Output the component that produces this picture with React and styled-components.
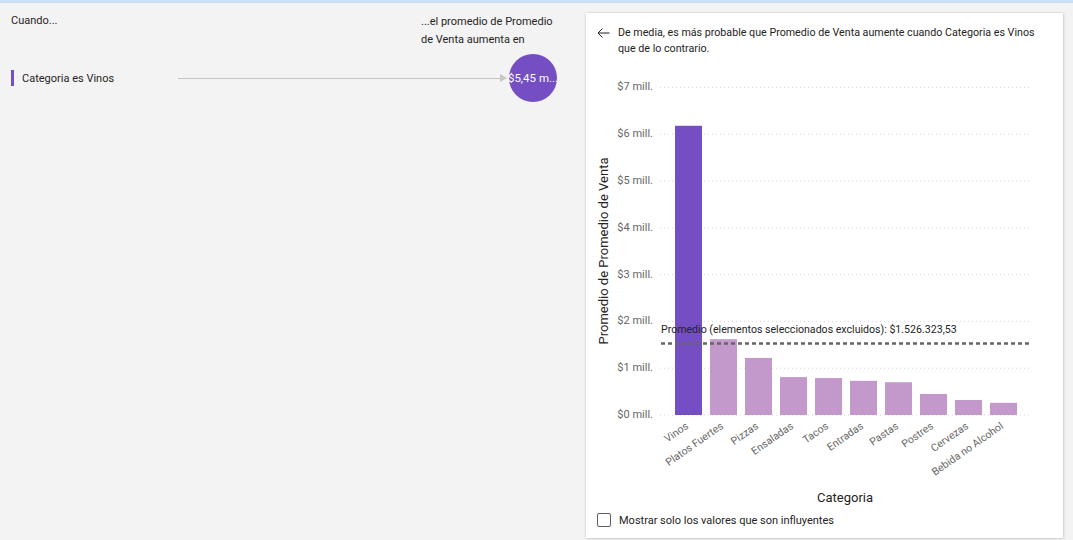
import React from 'react';
import styled, { createGlobalStyle } from 'styled-components';

const GlobalStyle = createGlobalStyle`
  html, body {
    margin: 0;
    padding: 0;
    background: #f3f3f3;
  }
  body {
    font-family: Roboto, "Open Sans", "Noto Sans", sans-serif;
    color: #252423;
  }
`;

const PURPLE = '#744ec2';
const LIGHT = '#c399cb';

const data = [
  { name: 'Vinos', value: 6.18, hi: true },
  { name: 'Platos Fuertes', value: 1.62 },
  { name: 'Pizzas', value: 1.22 },
  { name: 'Ensaladas', value: 0.81 },
  { name: 'Tacos', value: 0.79 },
  { name: 'Entradas', value: 0.73 },
  { name: 'Pastas', value: 0.70 },
  { name: 'Postres', value: 0.45 },
  { name: 'Cervezas', value: 0.32 },
  { name: 'Bebida no Alcohol', value: 0.26 },
];

const Page = styled.div`
  width: 1073px;
  height: 540px;
  box-sizing: border-box;
  border-top: 3px solid #c7e0f4;
  display: flex;
  overflow: hidden;
`;

const LeftPane = styled.div`
  flex: 1;
  padding: 9px 29px 0 11px;
  display: flex;
  flex-direction: column;
`;

const HeaderRow = styled.div`
  display: flex;
  justify-content: space-between;
  font-size: 11px;
  line-height: 18px;
`;

const Result = styled.div`
  width: 136px;
  padding-top: 1px;
`;

const InfluencerRow = styled.div`
  display: flex;
  align-items: center;
  margin-top: 5px;
  height: 48px;
`;

const Marker = styled.span`
  width: 3px;
  height: 16px;
  background: ${PURPLE};
  margin-right: 8px;
`;

const Label = styled.span`
  font-size: 11px;
  width: 156px;
`;

const Connector = styled.div`
  flex: 1;
  height: 1px;
  background: #c8c6c4;
  position: relative;
  &::after {
    content: '';
    position: absolute;
    right: -2px;
    top: -4px;
    border-left: 7px solid #c8c6c4;
    border-top: 4px solid transparent;
    border-bottom: 4px solid transparent;
  }
`;

const Bubble = styled.div`
  width: 48px;
  height: 48px;
  border-radius: 50%;
  background: ${PURPLE};
  color: #fff;
  font-size: 11.5px;
  display: flex;
  align-items: center;
  justify-content: center;
  white-space: nowrap;
  margin-left: 4px;
`;

const Card = styled.div`
  width: 477px;
  margin: 10px 10px 2px 0;
  background: #fff;
  box-shadow: 0 0 2px rgba(0, 0, 0, 0.18), 1px 1px 3px rgba(0, 0, 0, 0.1);
  display: flex;
  flex-direction: column;
`;

const CardHeader = styled.div`
  display: flex;
  align-items: flex-start;
  padding: 12px 10px 0 11px;
  font-size: 10.7px;
  line-height: 16px;
  height: 45px;
  box-sizing: content-box;
`;

const BackIcon = styled.svg`
  flex: none;
  margin: 3px 8px 0 0;
`;

const Chart = styled.svg`
  display: block;
  flex: none;
`;

const Footer = styled.label`
  display: flex;
  align-items: center;
  padding: 0 11px;
  height: 28px;
  font-size: 11px;
  gap: 8px;
`;

const Box = styled.span`
  width: 12px;
  height: 12px;
  border: 1px solid #605e5c;
  border-radius: 2px;
`;

const X0 = 89;
const STEP = 35;
const BW = 27;
const BASE = 345;
const SCALE = 46.8;

function BarChart() {
  const ticks = [0, 1, 2, 3, 4, 5, 6, 7];
  const avgY = BASE - 1.526 * SCALE;
  return (
    <Chart width="477" height="436" viewBox="0 0 477 436">
      {ticks.map((t) => {
        const y = BASE - t * SCALE;
        return (
          <g key={t}>
            <line x1="74" x2="444" y1={y} y2={y} stroke="#d6d6d6" strokeDasharray="1 3" />
            <text x="67" y={y} textAnchor="end" dominantBaseline="middle" fontSize="11" fill="#666">
              ${t} mill.
            </text>
          </g>
        );
      })}
      {data.map((d, i) => {
        const x = X0 + i * STEP;
        const h = d.value * SCALE;
        const ax = x + BW / 2 - 4;
        return (
          <g key={d.name}>
            <rect x={x} y={BASE - h} width={BW} height={h} fill={d.hi ? PURPLE : LIGHT} />
            <text
              x={ax}
              y={351}
              textAnchor="end"
              dominantBaseline="hanging"
              fontSize="10.5"
              fill="#666"
              transform={`rotate(-35 ${ax} 351)`}
            >
              {d.name}
            </text>
          </g>
        );
      })}
      <line x1="75" x2="444" y1={avgY} y2={avgY} stroke="#666" strokeWidth="2.5" strokeDasharray="4 3" />
      <text x="75" y={avgY - 11} fontSize="10.6" fill="#252423">
        Promedio (elementos seleccionados excluidos): $1.526.323,53
      </text>
      <text x="259" y="429" textAnchor="middle" dominantBaseline="middle" fontSize="13" fill="#252423">
        Categoria
      </text>
      <text
        x="19"
        y="181"
        textAnchor="middle"
        dominantBaseline="middle"
        fontSize="13"
        fill="#252423"
        transform="rotate(-90 19 181)"
      >
        Promedio de Promedio de Venta
      </text>
    </Chart>
  );
}

export default function App() {
  return (
    <>
      <GlobalStyle />
      <Page>
        <LeftPane>
          <HeaderRow>
            <span>Cuando...</span>
            <Result>...el promedio de Promedio de Venta aumenta en</Result>
          </HeaderRow>
          <InfluencerRow>
            <Marker />
            <Label>Categoria es Vinos</Label>
            <Connector />
            <Bubble>$5,45 m...</Bubble>
          </InfluencerRow>
        </LeftPane>
        <Card>
          <CardHeader>
            <BackIcon width="13" height="10" viewBox="0 0 13 10">
              <path d="M12.5 5H1M5.5 0.5L1 5l4.5 4.5" fill="none" stroke="#252423" strokeWidth="1" />
            </BackIcon>
            <span>De media, es más probable que Promedio de Venta aumente cuando Categoria es Vinos que de lo contrario.</span>
          </CardHeader>
          <BarChart />
          <Footer>
            <Box />
            Mostrar solo los valores que son influyentes
          </Footer>
        </Card>
      </Page>
    </>
  );
}
